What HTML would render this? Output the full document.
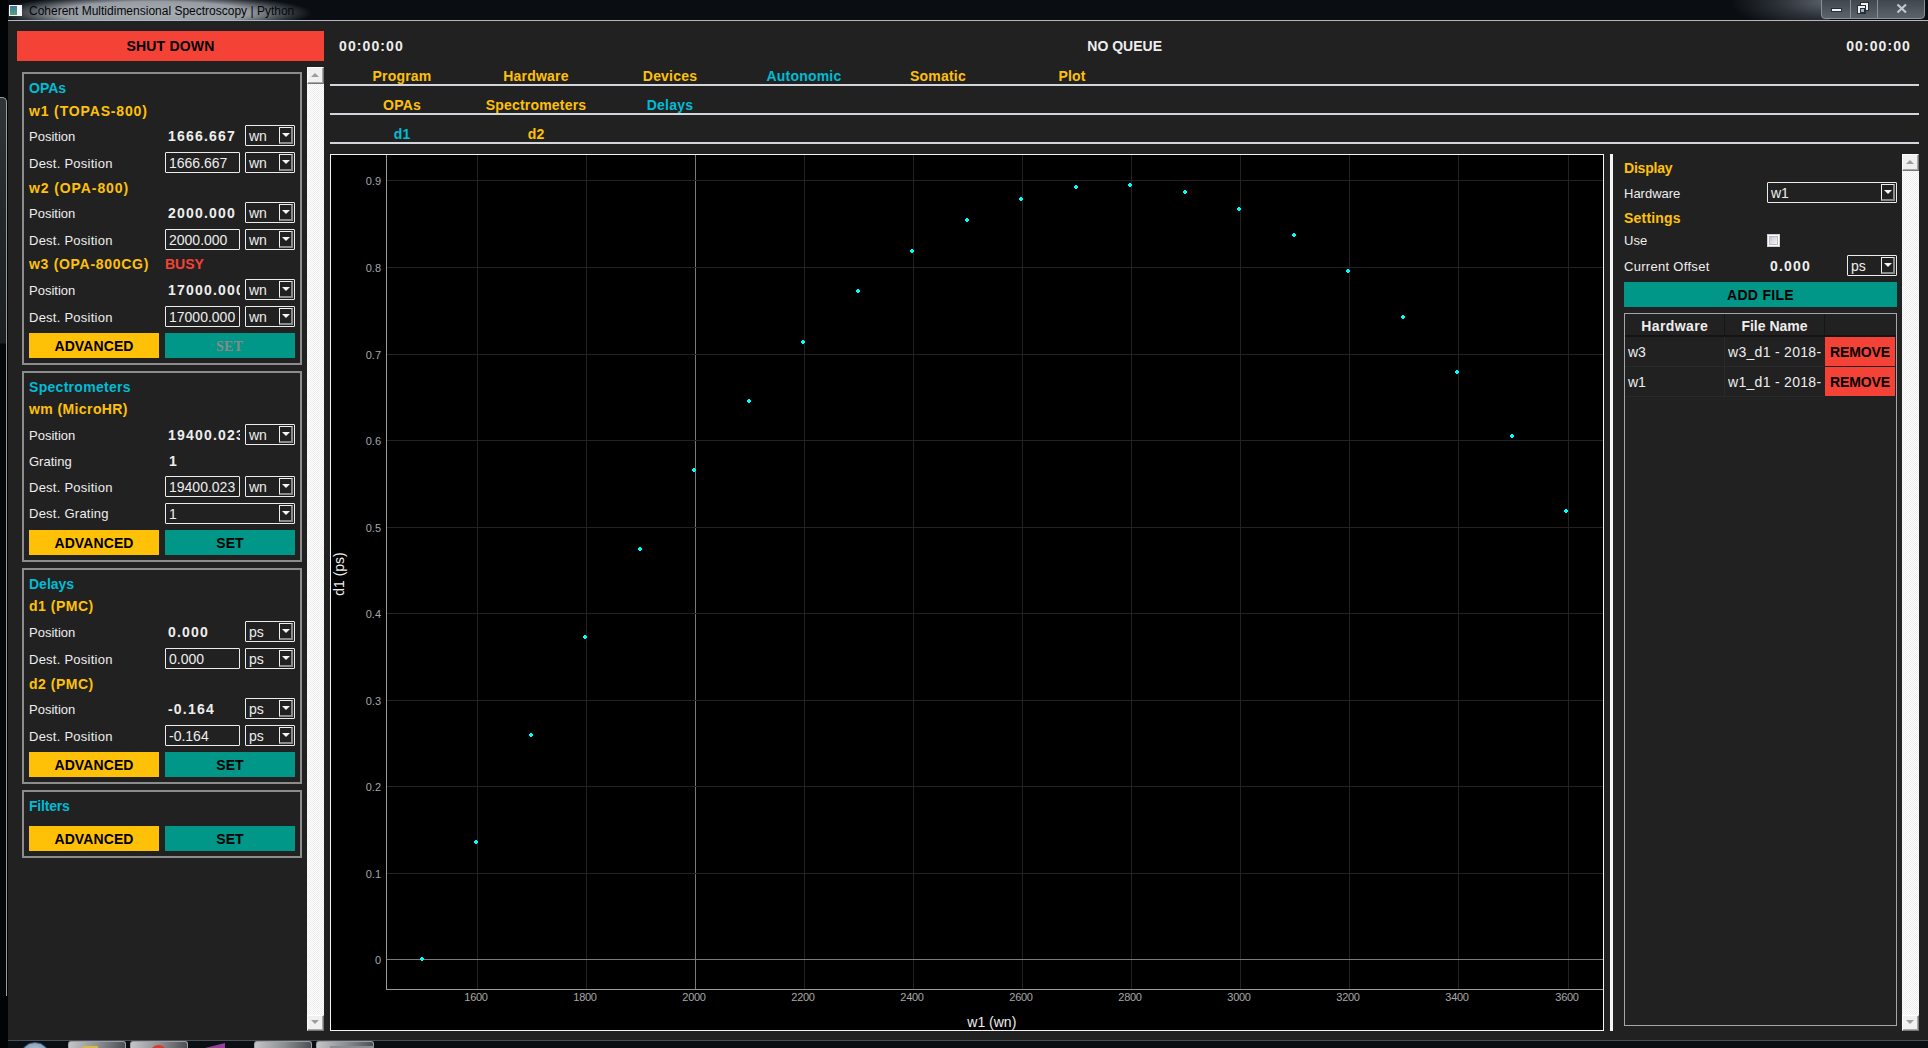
<!DOCTYPE html><html><head><meta charset="utf-8"><style>
html,body{margin:0;padding:0;}
body{width:1928px;height:1048px;overflow:hidden;background:#212121;position:relative;font-family:"Liberation Sans",sans-serif;}
body>div{position:absolute;}
.t{white-space:nowrap;}
.cb{border:1px solid #ececec;border-radius:1px;background:#212121;}
.dd{width:11px;height:14px;border-left:1px solid #f0f0f0;border-top:1px solid #f0f0f0;border-right:2px solid #8c8c8c;border-bottom:2px solid #8c8c8c;background:#212121;}
.tri{width:0;height:0;border-left:4px solid transparent;border-right:4px solid transparent;border-top:4px solid #f4f4f4;}
.gb{border:2px solid #8c8c8c;}
.track{background-color:#f8f8f8;background-image:repeating-conic-gradient(#ffffff 0 25%,#ececec 0 50%);background-size:2px 2px;}
.sbtn{width:15px;height:15px;background:#f0f0f0;border-left:1px solid #ffffff;border-top:1px solid #ffffff;border-right:1px solid #767676;border-bottom:1px solid #767676;box-shadow:inset -1px -1px 0 #a8a8a8;}
.tup{width:0;height:0;border-left:4px solid transparent;border-right:4px solid transparent;border-bottom:4px solid #9c9c9c;}
.tdn{width:0;height:0;border-left:4px solid transparent;border-right:4px solid transparent;border-top:4px solid #9c9c9c;}
</style></head><body><div style="left:0px;top:0px;width:8px;height:1048px;background:#020304;"></div>
<div style="left:-10px;top:97px;width:17px;height:899px;background:linear-gradient(#303538 0px,#22272a 120px,#1b1f22 245px,#05080b 246px);border:1px solid #9a9c9e;border-left:none;border-bottom:none;border-top-right-radius:5px;box-sizing:border-box;"></div>
<div style="left:8px;top:0px;width:1920px;height:20px;background:#0a0e13;"></div>
<div style="left:8px;top:0px;width:330px;height:20px;background:radial-gradient(ellipse 158px 19px at 146px 13px,#a8aeb4 0%,#969ca2 60%,rgba(70,76,82,0.6) 88%,rgba(10,14,19,0) 100%);"></div>
<div style="left:8px;top:20px;width:1920px;height:1px;background:#b4b8bc;"></div>
<div style="left:9px;top:5px;width:13px;height:11px;background:#f4f6f8;"></div>
<div style="left:10px;top:6px;width:7px;height:9px;background:linear-gradient(#3c78a8,#5aa070);"></div>
<div class="t" style="top:5px;font-size:12px;line-height:12px;color:#05070a;left:29px;">Coherent Multidimensional Spectroscopy | Python</div>
<div style="left:1700px;top:0px;width:130px;height:20px;background:radial-gradient(ellipse 100px 30px at 130px 2px,#5e656d 0%,rgba(60,66,72,0.7) 50%,rgba(10,14,19,0) 100%);"></div>
<div style="left:1821px;top:-3px;width:104px;height:22px;background:linear-gradient(#3d434a,#5c636b);border:1px solid #8a9097;border-radius:4px;box-sizing:border-box;"></div>
<div style="left:1850px;top:0px;width:1px;height:18px;background:#8a9097;"></div>
<div style="left:1877px;top:0px;width:1px;height:18px;background:#8a9097;"></div>
<div style="left:1831px;top:8px;width:11px;height:4px;background:#f4f4f4;border:1px solid #2a2f36;box-sizing:border-box;"></div>
<div style="left:1860px;top:2px;width:9px;height:9px;background:#f0f0f0;border:1px solid #2a2f36;box-sizing:border-box;"></div>
<div style="left:1857px;top:5px;width:9px;height:9px;background:#f0f0f0;border:1px solid #2a2f36;box-sizing:border-box;"></div>
<div style="left:1860px;top:8px;width:3px;height:3px;background:#9ab8d8;border:1px solid #2a2f36;"></div>
<svg style="position:absolute;left:1896px;top:3px" width="12" height="11"><path d="M1.5 1.5 L10 9.5 M10 1.5 L1.5 9.5" stroke="#c0c8d0" stroke-width="2.2" stroke-linecap="butt"/></svg>
<div style="left:8px;top:1040px;width:1920px;height:8px;background:#0a0f14;border-top:1px solid #4a5056;box-sizing:border-box;"></div>
<div style="left:20px;top:1042px;width:30px;height:30px;background:radial-gradient(circle at 50% 40%,#c8d4de,#7890a8 70%);border-radius:15px;border:1px solid #2e5a88;box-sizing:border-box;"></div>
<div style="left:68px;top:1041px;width:58px;height:8px;background:linear-gradient(100deg,#c4c6c8 0%,#8e9194 50%,#4a4e52 100%);border:1px solid #9ca0a4;border-bottom:none;border-radius:3px 3px 0 0;box-sizing:border-box;"></div>
<div style="left:130px;top:1041px;width:58px;height:8px;background:linear-gradient(100deg,#c4c6c8 0%,#8e9194 50%,#4a4e52 100%);border:1px solid #9ca0a4;border-bottom:none;border-radius:3px 3px 0 0;box-sizing:border-box;"></div>
<div style="left:254px;top:1041px;width:58px;height:8px;background:linear-gradient(100deg,#c4c6c8 0%,#8e9194 50%,#4a4e52 100%);border:1px solid #9ca0a4;border-bottom:none;border-radius:3px 3px 0 0;box-sizing:border-box;"></div>
<div style="left:316px;top:1041px;width:58px;height:8px;background:linear-gradient(100deg,#c4c6c8 0%,#8e9194 50%,#4a4e52 100%);border:1px solid #9ca0a4;border-bottom:none;border-radius:3px 3px 0 0;box-sizing:border-box;"></div>
<div style="left:83px;top:1046px;width:15px;height:2px;background:#d8b848;"></div>
<div style="left:150px;top:1045px;width:17px;height:10px;background:#d83c30;border-radius:9px 9px 0 0;"></div>
<div style="left:330px;top:1046px;width:44px;height:2px;background:#8a8e92;"></div>
<svg style="position:absolute;left:205px;top:1043px" width="20" height="5"><path d="M0 5 L20 0 L20 5 Z" fill="#9a3c9c"/></svg>
<div style="left:17px;top:31px;width:307px;height:30px;background:#F44336;"></div>
<div class="t" style="top:39px;font-size:14px;line-height:14px;color:#000;font-weight:bold;letter-spacing:0.2px;left:17.0px;width:307px;text-align:center;">SHUT DOWN</div>
<div class="t" style="top:39px;font-size:14px;line-height:14px;color:#EEEEEE;font-weight:bold;letter-spacing:1.1px;left:339px;">00:00:00</div>
<div class="t" style="top:39px;font-size:14px;line-height:14px;color:#EEEEEE;font-weight:bold;left:1024.7px;width:200px;text-align:center;">NO QUEUE</div>
<div class="t" style="top:39px;font-size:14px;line-height:14px;color:#EEEEEE;font-weight:bold;letter-spacing:1.1px;left:1711px;width:200px;text-align:right;">00:00:00</div>
<div class="t" style="top:69px;font-size:14px;line-height:14px;color:#FFC107;font-weight:bold;letter-spacing:0.2px;left:335.0px;width:134px;text-align:center;">Program</div>
<div class="t" style="top:69px;font-size:14px;line-height:14px;color:#FFC107;font-weight:bold;letter-spacing:0.2px;left:469.0px;width:134px;text-align:center;">Hardware</div>
<div class="t" style="top:69px;font-size:14px;line-height:14px;color:#FFC107;font-weight:bold;letter-spacing:0.2px;left:603.0px;width:134px;text-align:center;">Devices</div>
<div class="t" style="top:69px;font-size:14px;line-height:14px;color:#00BCD4;font-weight:bold;letter-spacing:0.2px;left:737.0px;width:134px;text-align:center;">Autonomic</div>
<div class="t" style="top:69px;font-size:14px;line-height:14px;color:#FFC107;font-weight:bold;letter-spacing:0.2px;left:871.0px;width:134px;text-align:center;">Somatic</div>
<div class="t" style="top:69px;font-size:14px;line-height:14px;color:#FFC107;font-weight:bold;letter-spacing:0.2px;left:1005.0px;width:134px;text-align:center;">Plot</div>
<div style="left:330px;top:84px;width:1589px;height:2px;background:#d2d6da;"></div>
<div class="t" style="top:98px;font-size:14px;line-height:14px;color:#FFC107;font-weight:bold;letter-spacing:0.2px;left:335.0px;width:134px;text-align:center;">OPAs</div>
<div class="t" style="top:98px;font-size:14px;line-height:14px;color:#FFC107;font-weight:bold;letter-spacing:0.2px;left:469.0px;width:134px;text-align:center;">Spectrometers</div>
<div class="t" style="top:98px;font-size:14px;line-height:14px;color:#00BCD4;font-weight:bold;letter-spacing:0.2px;left:603.0px;width:134px;text-align:center;">Delays</div>
<div style="left:330px;top:113px;width:1589px;height:2px;background:#d2d6da;"></div>
<div class="t" style="top:127px;font-size:14px;line-height:14px;color:#00BCD4;font-weight:bold;letter-spacing:0.2px;left:335.0px;width:134px;text-align:center;">d1</div>
<div class="t" style="top:127px;font-size:14px;line-height:14px;color:#FFC107;font-weight:bold;letter-spacing:0.2px;left:469.0px;width:134px;text-align:center;">d2</div>
<div style="left:330px;top:142px;width:1589px;height:2px;background:#d2d6da;"></div>
<div class="track" style="left:307px;top:67px;width:17px;height:964px;"></div>
<div class="sbtn" style="left:307px;top:67px;"></div>
<div class="tup" style="left:311px;top:73px;"></div>
<div class="sbtn" style="left:307px;top:1015px;height:14px;"></div>
<div class="tdn" style="left:311px;top:1020px;"></div>
<div class="gb" style="left:22px;top:72px;width:276px;height:289px;"></div>
<div class="t" style="top:81px;font-size:14px;line-height:14px;color:#00BCD4;font-weight:bold;left:29px;">OPAs</div>
<div class="t" style="top:104px;font-size:14px;line-height:14px;color:#FFC107;font-weight:bold;letter-spacing:0.85px;left:29px;">w1 (TOPAS-800)</div>
<div class="t" style="top:130px;font-size:13px;line-height:13px;color:#EEEEEE;left:29px;">Position</div>
<div class="t" style="top:129px;font-size:14px;line-height:14px;color:#EEEEEE;font-weight:bold;letter-spacing:1.2px;left:168px;width:72px;height:18px;overflow:hidden;white-space:nowrap;">1666.667</div>
<div class="cb" style="left:245px;top:125px;width:48px;height:19px;"></div>
<div class="dd" style="left:279px;top:127px;"></div>
<div class="tri" style="left:282px;top:133px;"></div>
<div class="t" style="top:129px;font-size:14px;line-height:14px;color:#EEEEEE;left:249px;">wn</div>
<div class="t" style="top:157px;font-size:13px;line-height:13px;color:#EEEEEE;letter-spacing:0.25px;left:29px;">Dest. Position</div>
<div class="cb" style="left:165px;top:152px;width:73px;height:19px;"></div>
<div class="t" style="top:156px;font-size:14px;line-height:14px;color:#EEEEEE;left:169px;width:69px;height:18px;overflow:hidden;white-space:nowrap;">1666.667</div>
<div class="cb" style="left:245px;top:152px;width:48px;height:19px;"></div>
<div class="dd" style="left:279px;top:154px;"></div>
<div class="tri" style="left:282px;top:160px;"></div>
<div class="t" style="top:156px;font-size:14px;line-height:14px;color:#EEEEEE;left:249px;">wn</div>
<div class="t" style="top:181px;font-size:14px;line-height:14px;color:#FFC107;font-weight:bold;letter-spacing:0.9px;left:29px;">w2 (OPA-800)</div>
<div class="t" style="top:207px;font-size:13px;line-height:13px;color:#EEEEEE;left:29px;">Position</div>
<div class="t" style="top:206px;font-size:14px;line-height:14px;color:#EEEEEE;font-weight:bold;letter-spacing:1.2px;left:168px;width:72px;height:18px;overflow:hidden;white-space:nowrap;">2000.000</div>
<div class="cb" style="left:245px;top:202px;width:48px;height:19px;"></div>
<div class="dd" style="left:279px;top:204px;"></div>
<div class="tri" style="left:282px;top:210px;"></div>
<div class="t" style="top:206px;font-size:14px;line-height:14px;color:#EEEEEE;left:249px;">wn</div>
<div class="t" style="top:234px;font-size:13px;line-height:13px;color:#EEEEEE;letter-spacing:0.25px;left:29px;">Dest. Position</div>
<div class="cb" style="left:165px;top:229px;width:73px;height:19px;"></div>
<div class="t" style="top:233px;font-size:14px;line-height:14px;color:#EEEEEE;left:169px;width:69px;height:18px;overflow:hidden;white-space:nowrap;">2000.000</div>
<div class="cb" style="left:245px;top:229px;width:48px;height:19px;"></div>
<div class="dd" style="left:279px;top:231px;"></div>
<div class="tri" style="left:282px;top:237px;"></div>
<div class="t" style="top:233px;font-size:14px;line-height:14px;color:#EEEEEE;left:249px;">wn</div>
<div class="t" style="top:257px;font-size:14px;line-height:14px;color:#FFC107;font-weight:bold;letter-spacing:0.7px;left:29px;">w3 (OPA-800CG)</div>
<div class="t" style="top:257px;font-size:14px;line-height:14px;color:#F44336;font-weight:bold;left:165px;">BUSY</div>
<div class="t" style="top:284px;font-size:13px;line-height:13px;color:#EEEEEE;left:29px;">Position</div>
<div class="t" style="top:283px;font-size:14px;line-height:14px;color:#EEEEEE;font-weight:bold;letter-spacing:1.2px;left:168px;width:72px;height:18px;overflow:hidden;white-space:nowrap;">17000.000</div>
<div class="cb" style="left:245px;top:279px;width:48px;height:19px;"></div>
<div class="dd" style="left:279px;top:281px;"></div>
<div class="tri" style="left:282px;top:287px;"></div>
<div class="t" style="top:283px;font-size:14px;line-height:14px;color:#EEEEEE;left:249px;">wn</div>
<div class="t" style="top:311px;font-size:13px;line-height:13px;color:#EEEEEE;letter-spacing:0.25px;left:29px;">Dest. Position</div>
<div class="cb" style="left:165px;top:306px;width:73px;height:19px;"></div>
<div class="t" style="top:310px;font-size:14px;line-height:14px;color:#EEEEEE;left:169px;width:69px;height:18px;overflow:hidden;white-space:nowrap;">17000.000</div>
<div class="cb" style="left:245px;top:306px;width:48px;height:19px;"></div>
<div class="dd" style="left:279px;top:308px;"></div>
<div class="tri" style="left:282px;top:314px;"></div>
<div class="t" style="top:310px;font-size:14px;line-height:14px;color:#EEEEEE;left:249px;">wn</div>
<div style="left:29px;top:333px;width:130px;height:25px;background:#FFC107;"></div>
<div class="t" style="top:339px;font-size:14px;line-height:14px;color:#000;font-weight:bold;letter-spacing:0.1px;left:29.0px;width:130px;text-align:center;">ADVANCED</div>
<div style="left:165px;top:333px;width:130px;height:25px;background:#009688;"></div>
<div class="t" style="top:340px;font-size:14px;line-height:14px;color:#8c8888;font-weight:bold;letter-spacing:0.2px;font-family:'Liberation Serif';left:164.5px;width:130px;text-align:center;">SET</div>
<div class="gb" style="left:22px;top:371px;width:276px;height:187px;"></div>
<div class="t" style="top:380px;font-size:14px;line-height:14px;color:#00BCD4;font-weight:bold;letter-spacing:0.3px;left:29px;">Spectrometers</div>
<div class="t" style="top:402px;font-size:14px;line-height:14px;color:#FFC107;font-weight:bold;letter-spacing:0.4px;left:29px;">wm (MicroHR)</div>
<div class="t" style="top:429px;font-size:13px;line-height:13px;color:#EEEEEE;left:29px;">Position</div>
<div class="t" style="top:428px;font-size:14px;line-height:14px;color:#EEEEEE;font-weight:bold;letter-spacing:1.2px;left:168px;width:72px;height:18px;overflow:hidden;white-space:nowrap;">19400.023</div>
<div class="cb" style="left:245px;top:424px;width:48px;height:19px;"></div>
<div class="dd" style="left:279px;top:426px;"></div>
<div class="tri" style="left:282px;top:432px;"></div>
<div class="t" style="top:428px;font-size:14px;line-height:14px;color:#EEEEEE;left:249px;">wn</div>
<div class="t" style="top:455px;font-size:13px;line-height:13px;color:#EEEEEE;left:29px;">Grating</div>
<div class="t" style="top:454px;font-size:14px;line-height:14px;color:#EEEEEE;font-weight:bold;left:169px;">1</div>
<div class="t" style="top:481px;font-size:13px;line-height:13px;color:#EEEEEE;letter-spacing:0.25px;left:29px;">Dest. Position</div>
<div class="cb" style="left:165px;top:476px;width:73px;height:19px;"></div>
<div class="t" style="top:480px;font-size:14px;line-height:14px;color:#EEEEEE;left:169px;width:69px;height:18px;overflow:hidden;white-space:nowrap;">19400.023</div>
<div class="cb" style="left:245px;top:476px;width:48px;height:19px;"></div>
<div class="dd" style="left:279px;top:478px;"></div>
<div class="tri" style="left:282px;top:484px;"></div>
<div class="t" style="top:480px;font-size:14px;line-height:14px;color:#EEEEEE;left:249px;">wn</div>
<div class="t" style="top:507px;font-size:13px;line-height:13px;color:#EEEEEE;letter-spacing:0.25px;left:29px;">Dest. Grating</div>
<div class="cb" style="left:165px;top:503px;width:128px;height:19px;"></div>
<div class="dd" style="left:279px;top:505px;"></div>
<div class="tri" style="left:282px;top:511px;"></div>
<div class="t" style="top:507px;font-size:14px;line-height:14px;color:#EEEEEE;left:169px;">1</div>
<div style="left:29px;top:530px;width:130px;height:25px;background:#FFC107;"></div>
<div class="t" style="top:536px;font-size:14px;line-height:14px;color:#000;font-weight:bold;letter-spacing:0.1px;left:29.0px;width:130px;text-align:center;">ADVANCED</div>
<div style="left:165px;top:530px;width:130px;height:25px;background:#009688;"></div>
<div class="t" style="top:536px;font-size:14px;line-height:14px;color:#000;font-weight:bold;letter-spacing:0.1px;left:165.0px;width:130px;text-align:center;">SET</div>
<div class="gb" style="left:22px;top:568px;width:276px;height:212px;"></div>
<div class="t" style="top:577px;font-size:14px;line-height:14px;color:#00BCD4;font-weight:bold;left:29px;">Delays</div>
<div class="t" style="top:599px;font-size:14px;line-height:14px;color:#FFC107;font-weight:bold;letter-spacing:0.5px;left:29px;">d1 (PMC)</div>
<div class="t" style="top:626px;font-size:13px;line-height:13px;color:#EEEEEE;left:29px;">Position</div>
<div class="t" style="top:625px;font-size:14px;line-height:14px;color:#EEEEEE;font-weight:bold;letter-spacing:1.2px;left:168px;width:72px;height:18px;overflow:hidden;white-space:nowrap;">0.000</div>
<div class="cb" style="left:245px;top:621px;width:48px;height:19px;"></div>
<div class="dd" style="left:279px;top:623px;"></div>
<div class="tri" style="left:282px;top:629px;"></div>
<div class="t" style="top:625px;font-size:14px;line-height:14px;color:#EEEEEE;left:249px;">ps</div>
<div class="t" style="top:653px;font-size:13px;line-height:13px;color:#EEEEEE;letter-spacing:0.25px;left:29px;">Dest. Position</div>
<div class="cb" style="left:165px;top:648px;width:73px;height:19px;"></div>
<div class="t" style="top:652px;font-size:14px;line-height:14px;color:#EEEEEE;left:169px;width:69px;height:18px;overflow:hidden;white-space:nowrap;">0.000</div>
<div class="cb" style="left:245px;top:648px;width:48px;height:19px;"></div>
<div class="dd" style="left:279px;top:650px;"></div>
<div class="tri" style="left:282px;top:656px;"></div>
<div class="t" style="top:652px;font-size:14px;line-height:14px;color:#EEEEEE;left:249px;">ps</div>
<div class="t" style="top:677px;font-size:14px;line-height:14px;color:#FFC107;font-weight:bold;letter-spacing:0.5px;left:29px;">d2 (PMC)</div>
<div class="t" style="top:703px;font-size:13px;line-height:13px;color:#EEEEEE;left:29px;">Position</div>
<div class="t" style="top:702px;font-size:14px;line-height:14px;color:#EEEEEE;font-weight:bold;letter-spacing:1.2px;left:168px;width:72px;height:18px;overflow:hidden;white-space:nowrap;">-0.164</div>
<div class="cb" style="left:245px;top:698px;width:48px;height:19px;"></div>
<div class="dd" style="left:279px;top:700px;"></div>
<div class="tri" style="left:282px;top:706px;"></div>
<div class="t" style="top:702px;font-size:14px;line-height:14px;color:#EEEEEE;left:249px;">ps</div>
<div class="t" style="top:730px;font-size:13px;line-height:13px;color:#EEEEEE;letter-spacing:0.25px;left:29px;">Dest. Position</div>
<div class="cb" style="left:165px;top:725px;width:73px;height:19px;"></div>
<div class="t" style="top:729px;font-size:14px;line-height:14px;color:#EEEEEE;left:169px;width:69px;height:18px;overflow:hidden;white-space:nowrap;">-0.164</div>
<div class="cb" style="left:245px;top:725px;width:48px;height:19px;"></div>
<div class="dd" style="left:279px;top:727px;"></div>
<div class="tri" style="left:282px;top:733px;"></div>
<div class="t" style="top:729px;font-size:14px;line-height:14px;color:#EEEEEE;left:249px;">ps</div>
<div style="left:29px;top:752px;width:130px;height:25px;background:#FFC107;"></div>
<div class="t" style="top:758px;font-size:14px;line-height:14px;color:#000;font-weight:bold;letter-spacing:0.1px;left:29.0px;width:130px;text-align:center;">ADVANCED</div>
<div style="left:165px;top:752px;width:130px;height:25px;background:#009688;"></div>
<div class="t" style="top:758px;font-size:14px;line-height:14px;color:#000;font-weight:bold;letter-spacing:0.1px;left:165.0px;width:130px;text-align:center;">SET</div>
<div class="gb" style="left:22px;top:790px;width:276px;height:64px;"></div>
<div class="t" style="top:799px;font-size:14px;line-height:14px;color:#00BCD4;font-weight:bold;letter-spacing:-0.2px;left:29px;">Filters</div>
<div style="left:29px;top:826px;width:130px;height:25px;background:#FFC107;"></div>
<div class="t" style="top:832px;font-size:14px;line-height:14px;color:#000;font-weight:bold;letter-spacing:0.1px;left:29.0px;width:130px;text-align:center;">ADVANCED</div>
<div style="left:165px;top:826px;width:130px;height:25px;background:#009688;"></div>
<div class="t" style="top:832px;font-size:14px;line-height:14px;color:#000;font-weight:bold;letter-spacing:0.1px;left:165.0px;width:130px;text-align:center;">SET</div>
<svg width="1274" height="877" style="position:absolute;left:330px;top:154px;" shape-rendering="crispEdges"><rect x="0" y="0" width="1274" height="877" fill="#000"/><rect x="147" y="1" width="1" height="834" fill="#222222"/><rect x="256" y="1" width="1" height="834" fill="#222222"/><rect x="365" y="1" width="1" height="834" fill="#7a7a7a"/><rect x="474" y="1" width="1" height="834" fill="#222222"/><rect x="583" y="1" width="1" height="834" fill="#222222"/><rect x="692" y="1" width="1" height="834" fill="#222222"/><rect x="801" y="1" width="1" height="834" fill="#222222"/><rect x="910" y="1" width="1" height="834" fill="#222222"/><rect x="1019" y="1" width="1" height="834" fill="#222222"/><rect x="1128" y="1" width="1" height="834" fill="#222222"/><rect x="1238" y="1" width="1" height="834" fill="#222222"/><rect x="57" y="805" width="1216" height="1" fill="#7a7a7a"/><rect x="57" y="719" width="1216" height="1" fill="#222222"/><rect x="57" y="632" width="1216" height="1" fill="#222222"/><rect x="57" y="546" width="1216" height="1" fill="#222222"/><rect x="57" y="459" width="1216" height="1" fill="#222222"/><rect x="57" y="373" width="1216" height="1" fill="#222222"/><rect x="57" y="286" width="1216" height="1" fill="#222222"/><rect x="57" y="200" width="1216" height="1" fill="#222222"/><rect x="57" y="113" width="1216" height="1" fill="#222222"/><rect x="57" y="26" width="1216" height="1" fill="#222222"/><rect x="56" y="1" width="1" height="835" fill="#9a9a9a"/><rect x="56" y="835" width="1217" height="1" fill="#9a9a9a"/><rect x="0" y="0" width="1274" height="1" fill="#f4f4f4"/><rect x="0" y="876" width="1274" height="1" fill="#f4f4f4"/><rect x="0" y="0" width="1" height="877" fill="#f4f4f4"/><rect x="1273" y="0" width="1" height="877" fill="#f4f4f4"/><rect x="91" y="803" width="2" height="4" fill="#00ffff"/><rect x="90" y="804" width="4" height="2" fill="#00ffff"/><rect x="145" y="686" width="2" height="4" fill="#00ffff"/><rect x="144" y="687" width="4" height="2" fill="#00ffff"/><rect x="200" y="579" width="2" height="4" fill="#00ffff"/><rect x="199" y="580" width="4" height="2" fill="#00ffff"/><rect x="254" y="481" width="2" height="4" fill="#00ffff"/><rect x="253" y="482" width="4" height="2" fill="#00ffff"/><rect x="309" y="393" width="2" height="4" fill="#00ffff"/><rect x="308" y="394" width="4" height="2" fill="#00ffff"/><rect x="363" y="314" width="2" height="4" fill="#00ffff"/><rect x="362" y="315" width="4" height="2" fill="#00ffff"/><rect x="418" y="245" width="2" height="4" fill="#00ffff"/><rect x="417" y="246" width="4" height="2" fill="#00ffff"/><rect x="472" y="186" width="2" height="4" fill="#00ffff"/><rect x="471" y="187" width="4" height="2" fill="#00ffff"/><rect x="527" y="135" width="2" height="4" fill="#00ffff"/><rect x="526" y="136" width="4" height="2" fill="#00ffff"/><rect x="581" y="95" width="2" height="4" fill="#00ffff"/><rect x="580" y="96" width="4" height="2" fill="#00ffff"/><rect x="636" y="64" width="2" height="4" fill="#00ffff"/><rect x="635" y="65" width="4" height="2" fill="#00ffff"/><rect x="690" y="43" width="2" height="4" fill="#00ffff"/><rect x="689" y="44" width="4" height="2" fill="#00ffff"/><rect x="745" y="31" width="2" height="4" fill="#00ffff"/><rect x="744" y="32" width="4" height="2" fill="#00ffff"/><rect x="799" y="29" width="2" height="4" fill="#00ffff"/><rect x="798" y="30" width="4" height="2" fill="#00ffff"/><rect x="854" y="36" width="2" height="4" fill="#00ffff"/><rect x="853" y="37" width="4" height="2" fill="#00ffff"/><rect x="908" y="53" width="2" height="4" fill="#00ffff"/><rect x="907" y="54" width="4" height="2" fill="#00ffff"/><rect x="963" y="79" width="2" height="4" fill="#00ffff"/><rect x="962" y="80" width="4" height="2" fill="#00ffff"/><rect x="1017" y="115" width="2" height="4" fill="#00ffff"/><rect x="1016" y="116" width="4" height="2" fill="#00ffff"/><rect x="1072" y="161" width="2" height="4" fill="#00ffff"/><rect x="1071" y="162" width="4" height="2" fill="#00ffff"/><rect x="1126" y="216" width="2" height="4" fill="#00ffff"/><rect x="1125" y="217" width="4" height="2" fill="#00ffff"/><rect x="1181" y="280" width="2" height="4" fill="#00ffff"/><rect x="1180" y="281" width="4" height="2" fill="#00ffff"/><rect x="1235" y="355" width="2" height="4" fill="#00ffff"/><rect x="1234" y="356" width="4" height="2" fill="#00ffff"/></svg>
<div class="t" style="top:955px;font-size:11px;line-height:11px;color:#a8a8a8;left:321px;width:60px;text-align:right;">0</div>
<div class="t" style="top:869px;font-size:11px;line-height:11px;color:#a8a8a8;left:321px;width:60px;text-align:right;">0.1</div>
<div class="t" style="top:782px;font-size:11px;line-height:11px;color:#a8a8a8;left:321px;width:60px;text-align:right;">0.2</div>
<div class="t" style="top:696px;font-size:11px;line-height:11px;color:#a8a8a8;left:321px;width:60px;text-align:right;">0.3</div>
<div class="t" style="top:609px;font-size:11px;line-height:11px;color:#a8a8a8;left:321px;width:60px;text-align:right;">0.4</div>
<div class="t" style="top:523px;font-size:11px;line-height:11px;color:#a8a8a8;left:321px;width:60px;text-align:right;">0.5</div>
<div class="t" style="top:436px;font-size:11px;line-height:11px;color:#a8a8a8;left:321px;width:60px;text-align:right;">0.6</div>
<div class="t" style="top:350px;font-size:11px;line-height:11px;color:#a8a8a8;left:321px;width:60px;text-align:right;">0.7</div>
<div class="t" style="top:263px;font-size:11px;line-height:11px;color:#a8a8a8;left:321px;width:60px;text-align:right;">0.8</div>
<div class="t" style="top:176px;font-size:11px;line-height:11px;color:#a8a8a8;left:321px;width:60px;text-align:right;">0.9</div>
<div class="t" style="top:992px;font-size:11px;line-height:11px;color:#a8a8a8;letter-spacing:-0.3px;left:446.0px;width:60px;text-align:center;">1600</div>
<div class="t" style="top:992px;font-size:11px;line-height:11px;color:#a8a8a8;letter-spacing:-0.3px;left:555.0px;width:60px;text-align:center;">1800</div>
<div class="t" style="top:992px;font-size:11px;line-height:11px;color:#a8a8a8;letter-spacing:-0.3px;left:664.0px;width:60px;text-align:center;">2000</div>
<div class="t" style="top:992px;font-size:11px;line-height:11px;color:#a8a8a8;letter-spacing:-0.3px;left:773.0px;width:60px;text-align:center;">2200</div>
<div class="t" style="top:992px;font-size:11px;line-height:11px;color:#a8a8a8;letter-spacing:-0.3px;left:882.0px;width:60px;text-align:center;">2400</div>
<div class="t" style="top:992px;font-size:11px;line-height:11px;color:#a8a8a8;letter-spacing:-0.3px;left:991.0px;width:60px;text-align:center;">2600</div>
<div class="t" style="top:992px;font-size:11px;line-height:11px;color:#a8a8a8;letter-spacing:-0.3px;left:1100.0px;width:60px;text-align:center;">2800</div>
<div class="t" style="top:992px;font-size:11px;line-height:11px;color:#a8a8a8;letter-spacing:-0.3px;left:1209.0px;width:60px;text-align:center;">3000</div>
<div class="t" style="top:992px;font-size:11px;line-height:11px;color:#a8a8a8;letter-spacing:-0.3px;left:1318.0px;width:60px;text-align:center;">3200</div>
<div class="t" style="top:992px;font-size:11px;line-height:11px;color:#a8a8a8;letter-spacing:-0.3px;left:1427.0px;width:60px;text-align:center;">3400</div>
<div class="t" style="top:992px;font-size:11px;line-height:11px;color:#a8a8a8;letter-spacing:-0.3px;left:1537.0px;width:60px;text-align:center;">3600</div>
<div class="t" style="top:1015px;font-size:14px;line-height:14px;color:#EEEEEE;left:931.8px;width:120px;text-align:center;">w1 (wn)</div>
<div class="t" style="left:317px;top:567px;width:44px;height:14px;font-size:14px;line-height:14px;color:#EEEEEE;transform:rotate(-90deg);text-align:center;">d1 (ps)</div>
<div style="left:1610px;top:154px;width:3px;height:877px;background:#f4f4f4;"></div>
<div class="track" style="left:1902px;top:154px;width:17px;height:877px;"></div>
<div class="sbtn" style="left:1902px;top:154px;"></div>
<div class="tup" style="left:1906px;top:160px;"></div>
<div class="sbtn" style="left:1902px;top:1015px;height:14px;"></div>
<div class="tdn" style="left:1906px;top:1020px;"></div>
<div class="t" style="top:161px;font-size:14px;line-height:14px;color:#FFC107;font-weight:bold;letter-spacing:-0.2px;left:1624px;">Display</div>
<div class="t" style="top:187px;font-size:13px;line-height:13px;color:#EEEEEE;left:1624px;">Hardware</div>
<div class="cb" style="left:1767px;top:182px;width:128px;height:19px;"></div>
<div class="dd" style="left:1881px;top:184px;"></div>
<div class="tri" style="left:1884px;top:190px;"></div>
<div class="t" style="top:186px;font-size:14px;line-height:14px;color:#EEEEEE;left:1771px;">w1</div>
<div class="t" style="top:211px;font-size:14px;line-height:14px;color:#FFC107;font-weight:bold;letter-spacing:0.2px;left:1624px;">Settings</div>
<div class="t" style="top:234px;font-size:13px;line-height:13px;color:#EEEEEE;left:1624px;">Use</div>
<div style="left:1767px;top:234px;width:13px;height:13px;background:#fdfdfd;border:1px solid #cfd0d2;box-sizing:border-box;"></div>
<div style="left:1769px;top:236px;width:9px;height:9px;background:linear-gradient(135deg,#c4c8d0,#f6f6f6);border:1px solid #b8bcc4;box-sizing:border-box;"></div>
<div class="t" style="top:260px;font-size:13px;line-height:13px;color:#EEEEEE;letter-spacing:0.3px;left:1624px;">Current Offset</div>
<div class="t" style="top:259px;font-size:14px;line-height:14px;color:#EEEEEE;font-weight:bold;letter-spacing:1.2px;left:1770px;">0.000</div>
<div class="cb" style="left:1847px;top:255px;width:48px;height:19px;"></div>
<div class="dd" style="left:1881px;top:257px;"></div>
<div class="tri" style="left:1884px;top:263px;"></div>
<div class="t" style="top:259px;font-size:14px;line-height:14px;color:#EEEEEE;left:1851px;">ps</div>
<div style="left:1624px;top:282px;width:273px;height:25px;background:#009688;"></div>
<div class="t" style="top:288px;font-size:14px;line-height:14px;color:#000;font-weight:bold;letter-spacing:0.3px;left:1624.0px;width:273px;text-align:center;">ADD FILE</div>
<div style="left:1624px;top:313px;width:273px;height:713px;border:1px solid #a4a6aa;box-sizing:border-box;"></div>
<div style="left:1625px;top:335px;width:271px;height:2px;background:#141414;"></div>
<div style="left:1724px;top:314px;width:1px;height:21px;background:#161616;"></div>
<div style="left:1824px;top:314px;width:1px;height:21px;background:#161616;"></div>
<div style="left:1724px;top:337px;width:1px;height:59px;background:#2a2a2a;"></div>
<div style="left:1625px;top:366px;width:199px;height:1px;background:#2a2a2a;"></div>
<div style="left:1625px;top:396px;width:199px;height:1px;background:#2a2a2a;"></div>
<div class="t" style="top:319px;font-size:14px;line-height:14px;color:#EEEEEE;font-weight:bold;letter-spacing:0.4px;left:1624.8px;width:100px;text-align:center;">Hardware</div>
<div class="t" style="top:319px;font-size:14px;line-height:14px;color:#EEEEEE;font-weight:bold;left:1724.5px;width:100px;text-align:center;">File Name</div>
<div style="left:1825px;top:337px;width:70px;height:29px;background:#F44336;"></div>
<div class="t" style="top:345px;font-size:14px;line-height:14px;color:#000;font-weight:bold;letter-spacing:-0.1px;left:1825.0px;width:70px;text-align:center;">REMOVE</div>
<div style="left:1825px;top:367px;width:70px;height:29px;background:#F44336;"></div>
<div class="t" style="top:375px;font-size:14px;line-height:14px;color:#000;font-weight:bold;letter-spacing:-0.1px;left:1825.0px;width:70px;text-align:center;">REMOVE</div>
<div class="t" style="top:345px;font-size:14px;line-height:14px;color:#EEEEEE;left:1628px;">w3</div>
<div class="t" style="top:375px;font-size:14px;line-height:14px;color:#EEEEEE;left:1628px;">w1</div>
<div class="t" style="top:345px;font-size:14px;line-height:14px;color:#EEEEEE;letter-spacing:0.3px;left:1728px;width:93px;height:18px;overflow:hidden;white-space:nowrap;">w3_d1 - 2018-03-05</div>
<div class="t" style="top:375px;font-size:14px;line-height:14px;color:#EEEEEE;letter-spacing:0.3px;left:1728px;width:93px;height:18px;overflow:hidden;white-space:nowrap;">w1_d1 - 2018-03-05</div></body></html>
